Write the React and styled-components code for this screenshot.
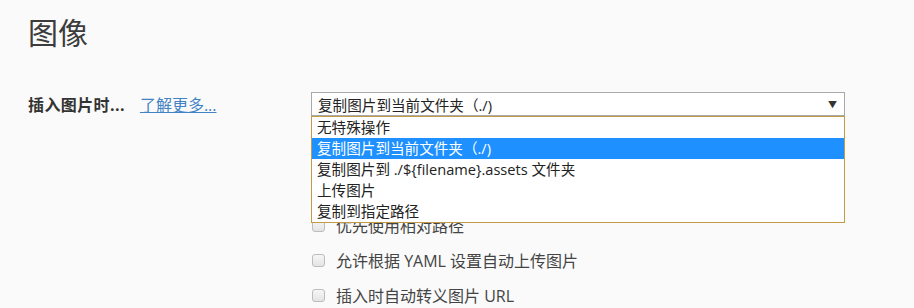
import React from "react";
import styled, { createGlobalStyle } from "styled-components";

const GlobalStyle = createGlobalStyle`
  html, body {
    margin: 0;
    background: #fafafa;
  }
  body {
    font-family: "Open Sans", "Noto Sans CJK SC", sans-serif;
    color: #333;
  }
`;

const Page = styled.div`
  padding: 16px 28px 0 28px;
  height: 308px;
  box-sizing: border-box;
  overflow: hidden;
`;

const Title = styled.h2`
  margin: 0 0 46px 0;
  font-size: 30px;
  line-height: 30px;
  font-weight: normal;
  color: #3c3c3c;
  font-family: "Noto Sans CJK SC", sans-serif;
`;

const SettingRow = styled.div`
  display: flex;
  align-items: flex-start;
`;

const LabelCol = styled.div`
  width: 283px;
  display: flex;
  align-items: center;
  height: 24px;
  font-size: 16px;
`;

const Label = styled.span`
  font-weight: bold;
  color: #333;
  margin-right: 15px;
  letter-spacing: 0.4px;
`;

const Link = styled.a`
  color: #4183c4;
  text-decoration: underline;
  cursor: pointer;
`;

const ControlCol = styled.div`
  width: 534px;
`;

const SelectWrap = styled.div`
  position: relative;
`;

const SelectBox = styled.div`
  height: 24px;
  box-sizing: border-box;
  border: 1px solid #a9a9a9;
  background: #fff;
  display: flex;
  align-items: center;
  justify-content: space-between;
  padding: 0 7px 0 6px;
  font-size: 14.6px;
  color: #222;
`;

const Arrow = styled.span`
  font-size: 9px;
  color: #333;
`;

const Menu = styled.ul`
  position: absolute;
  top: 100%;
  left: 0;
  right: 0;
  margin: 0;
  padding: 0;
  list-style: none;
  background: #fff;
  border: 1px solid #c49b45;
  z-index: 2;
`;

const MenuItem = styled.li`
  height: 21px;
  line-height: 21px;
  padding-left: 5px;
  font-size: 14.6px;
  color: ${(p) => (p.$active ? "#fff" : "#222")};
  background: ${(p) => (p.$active ? "#1e90ff" : "transparent")};
`;

const CheckList = styled.div`
  margin-top: 27px;
  display: flex;
  flex-direction: column;
  gap: 11px;
`;

const CheckRow = styled.label`
  display: flex;
  align-items: center;
  height: 24px;
  font-size: 16px;
  color: #444;
`;

const Box = styled.span`
  width: 11px;
  height: 11px;
  border: 1px solid #bcbcbc;
  border-radius: 3px;
  background: linear-gradient(#f6f6f6, #e4e4e4);
  margin: 0 11px 0 1px;
  flex-shrink: 0;
`;

const options = [
  "无特殊操作",
  "复制图片到当前文件夹（./)",
  "复制图片到 ./${filename}.assets 文件夹",
  "上传图片",
  "复制到指定路径",
];

const checks = [
  "对本地位置的图片应用上述规则",
  "对网络位置的图片应用上述规则",
  "优先使用相对路径",
  "允许根据 YAML 设置自动上传图片",
  "插入时自动转义图片 URL",
];

export default function App() {
  return (
    <>
      <GlobalStyle />
      <Page>
        <Title>图像</Title>
        <SettingRow>
          <LabelCol>
            <Label>插入图片时...</Label>
            <Link>了解更多...</Link>
          </LabelCol>
          <ControlCol>
            <SelectWrap>
              <SelectBox>
                <span>{options[1]}</span>
                <Arrow>▼</Arrow>
              </SelectBox>
              <Menu>
                {options.map((o, i) => (
                  <MenuItem key={o} $active={i === 1}>
                    {o}
                  </MenuItem>
                ))}
              </Menu>
            </SelectWrap>
            <CheckList>
              {checks.map((c) => (
                <CheckRow key={c}>
                  <Box />
                  {c}
                </CheckRow>
              ))}
            </CheckList>
          </ControlCol>
        </SettingRow>
      </Page>
    </>
  );
}
